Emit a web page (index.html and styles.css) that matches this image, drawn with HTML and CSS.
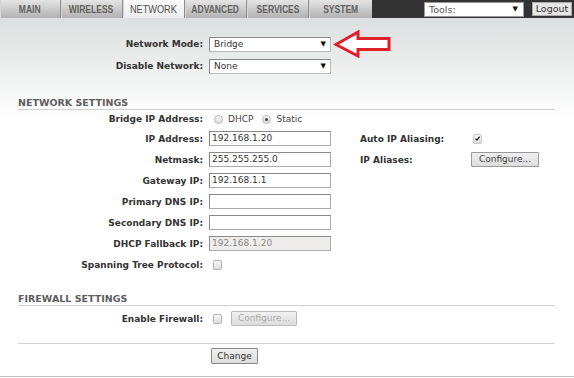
FILE: index.html
```html
<!DOCTYPE html>
<html>
<head>
<meta charset="utf-8">
<link rel="stylesheet" href="styles.css">
</head>
<body>
<div class="page">
  <div class="topbar">
    <nav class="tabs">
      <a class="tab"><span>MAIN</span></a>
      <a class="tab"><span>WIRELESS</span></a>
      <a class="tab active"><span>NETWORK</span></a>
      <a class="tab"><span>ADVANCED</span></a>
      <a class="tab"><span>SERVICES</span></a>
      <a class="tab"><span>SYSTEM</span></a>
    </nav>
    <div class="tools">
      <div class="tools-select"><span>Tools:</span><span class="caret">&#9660;</span></div>
      <button class="logout">Logout</button>
    </div>
  </div>

  <div class="content">
    <div class="mode-block">
      <div class="mode-row">
        <span class="lbl">Network Mode:</span>
        <div class="select"><span>Bridge</span><span class="caret">&#9660;</span></div>
      </div>
      <div class="mode-row">
        <span class="lbl">Disable Network:</span>
        <div class="select"><span>None</span><span class="caret">&#9660;</span></div>
      </div>
      <svg class="arrow" viewBox="0 0 60 29" width="60" height="29">
        <path d="M3 15.5 L25 3 L25 9.5 L56 9.5 L56 20.5 L25 20.5 L25 27 Z" fill="#fff" stroke="#e0202a" stroke-width="3" stroke-linejoin="miter"/>
      </svg>
    </div>

    <h2 class="section-title">NETWORK SETTINGS</h2>
    <div class="form-grid net-grid">
      <span class="lbl">Bridge IP Address:</span>
      <div class="radios">
        <span class="radio"></span><span class="opt">DHCP</span>
        <span class="radio on"></span><span class="opt">Static</span>
      </div>
      <span></span><span></span>

      <span class="lbl">IP Address:</span>
      <div class="input">192.168.1.20</div>
      <span class="lbl2">Auto IP Aliasing:</span>
      <span class="check on"><svg viewBox="0 0 9 9" width="9" height="9"><path d="M2 4.6 L3.8 6.6 L7.2 2" fill="none" stroke="#222" stroke-width="1.6"/></svg></span>

      <span class="lbl">Netmask:</span>
      <div class="input">255.255.255.0</div>
      <span class="lbl2">IP Aliases:</span>
      <button class="btn">Configure...</button>

      <span class="lbl">Gateway IP:</span>
      <div class="input">192.168.1.1</div>
      <span></span><span></span>

      <span class="lbl">Primary DNS IP:</span>
      <div class="input"></div>
      <span></span><span></span>

      <span class="lbl">Secondary DNS IP:</span>
      <div class="input"></div>
      <span></span><span></span>

      <span class="lbl">DHCP Fallback IP:</span>
      <div class="input disabled">192.168.1.20</div>
      <span></span><span></span>

      <span class="lbl">Spanning Tree Protocol:</span>
      <div class="cell"><span class="check"></span></div>
      <span></span><span></span>
    </div>

    <h2 class="section-title fw">FIREWALL SETTINGS</h2>
    <div class="form-grid fw-grid">
      <span class="lbl">Enable Firewall:</span>
      <div class="cell"><span class="check"></span><button class="btn disabled">Configure...</button></div>
    </div>

    <div class="actions">
      <button class="btn change">Change</button>
    </div>
    <div class="footer-line"></div>
  </div>
</div>
</body>
</html>
```

FILE: styles.css
```css
html, body {
  margin: 0;
  padding: 0;
}
body {
  width: 574px;
  height: 378px;
  overflow: hidden;
  font-family: "DejaVu Sans", Verdana, sans-serif;
  font-size: 9px;
  color: #333;
  background: #fff;
}
.page {
  width: 574px;
}

/* top bar */
.topbar {
  display: flex;
  height: 18px;
  background: #333;
}
.tabs {
  display: flex;
  height: 18px;
}
.tab {
  box-sizing: border-box;
  width: 62px;
  height: 18px;
  display: flex;
  align-items: center;
  justify-content: center;
  font-family: "Liberation Sans", Arial, sans-serif;
  font-weight: bold;
  font-size: 11.5px;
  color: #626262;
  background: linear-gradient(#e4e4e4, #b2b2b2);
  border-right: 1px solid #8e8e8e;
  box-shadow: inset 1px 0 0 #d6d6d6;
}
.tab span {
  display: inline-block;
  transform: scaleX(0.74);
  white-space: nowrap;
}
.tab:first-child {
  width: 61px;
}
.tab:last-child {
  width: 63px;
  border-right: none;
}
.tab.active {
  background: linear-gradient(#fbfbfb, #ececec);
  color: #505050;
  font-weight: normal;
}
.tab.active span {
  transform: scaleX(0.8);
}
.tools {
  flex: 1;
  display: flex;
  align-items: center;
  justify-content: flex-end;
  gap: 8px;
  padding-right: 2px;
}
.tools-select {
  box-sizing: border-box;
  width: 100px;
  height: 15px;
  background: #fff;
  border: 1px solid #999;
  display: flex;
  align-items: center;
  justify-content: space-between;
  padding: 0 5px 0 4px;
  font-size: 9.5px;
  color: #555;
}
.caret {
  font-size: 7px;
  color: #111;
}
.logout {
  box-sizing: border-box;
  height: 14px;
  width: 40px;
  padding: 0;
  border: 1px solid #aaa;
  background: #e6e6e6;
  font-family: "DejaVu Sans", sans-serif;
  font-size: 9.5px;
  color: #333;
  line-height: 12px;
}

/* content */
.content {
  background: linear-gradient(#dcdfdf 0px, #eff0f0 55px, #fff 100px);
}
.mode-block {
  position: relative;
  padding-top: 15px;
}
.mode-row {
  display: flex;
  align-items: center;
  height: 22px;
}
.mode-row .lbl {
  width: 209px;
  box-sizing: border-box;
  padding-right: 6px;
  text-align: right;
}
.lbl, .lbl2 {
  font-weight: bold;
  color: #333;
  white-space: nowrap;
}
.lbl {
  text-align: right;
}
.select {
  box-sizing: border-box;
  width: 122px;
  height: 15px;
  background: #fff;
  border: 1px solid #888;
  border-right-color: #bbb;
  border-bottom-color: #bbb;
  display: flex;
  align-items: center;
  justify-content: space-between;
  padding: 0 4px 0 4px;
  color: #333;
}
.arrow {
  position: absolute;
  left: 333px;
  top: 11px;
}

.section-title {
  margin: 20px 19px 0 18px;
  padding-bottom: 1px;
  font-size: 9.5px;
  line-height: 11px;
  font-weight: bold;
  color: #5e5e5e;
  border-bottom: 1px solid #cfcfcf;
}
.section-title.fw {
  margin-top: 18px;
}

.form-grid {
  display: grid;
  grid-template-columns: 185px 145px 105px auto;
  column-gap: 6px;
  align-items: center;
  padding-left: 18px;
}
.net-grid {
  grid-template-rows: 18px repeat(7, 21px);
}
.fw-grid {
  grid-template-rows: 21px;
  margin-top: 2px;
}
.input {
  box-sizing: border-box;
  width: 122px;
  height: 15px;
  background: #fff;
  border: 1px solid #888;
  border-right-color: #aaa;
  border-bottom-color: #aaa;
  padding: 0 2px;
  line-height: 13px;
  color: #333;
}
.input.disabled {
  background: #eeedeb;
  color: #888;
}
.radios {
  display: flex;
  align-items: center;
}
.radio {
  box-sizing: border-box;
  width: 9px;
  height: 9px;
  border-radius: 50%;
  border: 1px solid #b8b8b8;
  background: linear-gradient(#f4f4f4, #dcdcdc);
  margin-left: 5px;
  margin-right: 5px;
  position: relative;
}
.radio.on {
  margin-left: 9px;
}
.radio.on::after {
  content: "";
  position: absolute;
  left: 2px;
  top: 2px;
  width: 3px;
  height: 3px;
  border-radius: 50%;
  background: #444;
}
.opt {
  color: #444;
}
.cell {
  display: flex;
  align-items: center;
}
.check {
  box-sizing: border-box;
  display: inline-flex;
  align-items: center;
  justify-content: center;
  width: 9px;
  height: 10px;
  border: 1px solid #b4b4b4;
  border-radius: 2px;
  background: linear-gradient(#f6f6f6, #dedede);
  margin-left: 4px;
}
.check.on {
  margin-left: 2px;
  border-color: #c8c8c8;
}
.check svg {
  display: block;
}
.lbl2 {
  text-align: left;
}
.btn {
  box-sizing: border-box;
  height: 15px;
  padding: 0 5px;
  border: 1px solid #999;
  border-radius: 1px;
  background: linear-gradient(#f0f0f0, #dcdcdc);
  font-family: "DejaVu Sans", sans-serif;
  font-size: 9px;
  line-height: 13px;
  color: #444;
  justify-self: start;
}
.btn.disabled {
  color: #aaa;
  border-color: #bbb;
  margin-left: 9px;
  width: 66px;
}
.net-grid .btn {
  width: 68px;
}
.actions {
  margin: 14px 19px 0 18px;
  border-top: 1px solid #d2d2d2;
  padding-top: 4px;
  height: 33px;
  box-sizing: border-box;
}
.btn.change {
  margin-left: 193px;
  width: 47px;
  height: 16px;
  padding: 0;
  border-color: #888;
  color: #333;
}
.footer-line {
  border-top: 1px solid #bdbdbd;
  height: 10px;
  background: #fff;
}
```
